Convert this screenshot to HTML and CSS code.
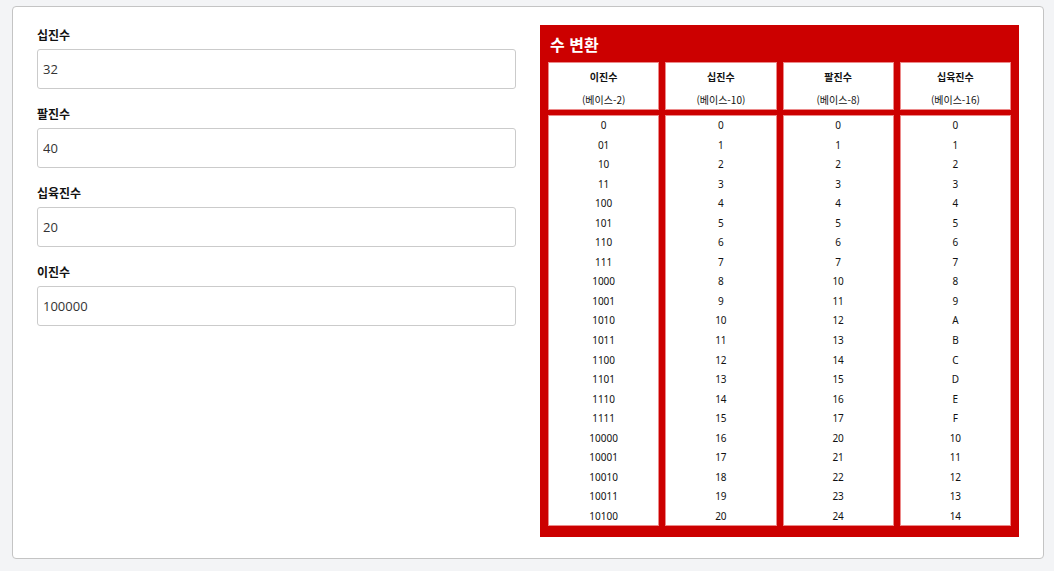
FILE: index.html
```html
<!DOCTYPE html>
<html lang="ko">
  <head>
    <meta charset="UTF-8" />
    <meta name="viewport" content="width=device-width, initial-scale=1.0" />
    <title>수 변환</title>
    <link rel="stylesheet" href="styles.css">
  </head>
  <body>
    <div class="converter-card">
      <form class="converter-form" id="converterForm">
        <div class="field">
          <label for="decimal">십진수</label>
          <input type="text" id="decimal" value="32" />
        </div>
        <div class="field">
          <label for="octal">팔진수</label>
          <input type="text" id="octal" value="40" />
        </div>
        <div class="field">
          <label for="hex">십육진수</label>
          <input type="text" id="hex" value="20" />
        </div>
        <div class="field">
          <label for="binary">이진수</label>
          <input type="text" id="binary" value="100000" />
        </div>
      </form>

      <div class="base-table">
        <h2>수 변환</h2>
        <div class="base-grid" id="baseGrid">
          <div class="head-cell"><strong>이진수</strong><span>(베이스-2)</span></div>
          <div class="head-cell"><strong>십진수</strong><span>(베이스-10)</span></div>
          <div class="head-cell"><strong>팔진수</strong><span>(베이스-8)</span></div>
          <div class="head-cell"><strong>십육진수</strong><span>(베이스-16)</span></div>
          <div class="body-cell" id="col2"></div>
          <div class="body-cell" id="col10"></div>
          <div class="body-cell" id="col8"></div>
          <div class="body-cell" id="col16"></div>
        </div>
      </div>
    </div>

    <script>
      const cols = {
        col2: (n) => (n === 1 ? "01" : n.toString(2)),
        col10: (n) => n.toString(10),
        col8: (n) => n.toString(8),
        col16: (n) => n.toString(16).toUpperCase(),
      };

      Object.keys(cols).forEach((id) => {
        const cell = document.getElementById(id);
        for (let n = 0; n <= 20; n++) {
          const row = document.createElement("div");
          row.textContent = cols[id](n);
          cell.appendChild(row);
        }
      });

      const inputs = {
        decimal: 10,
        octal: 8,
        hex: 16,
        binary: 2,
      };

      Object.keys(inputs).forEach((id) => {
        document.getElementById(id).addEventListener("input", (e) => {
          const value = parseInt(e.target.value, inputs[id]);
          if (isNaN(value)) return;
          document.getElementById("decimal").value = value.toString(10);
          document.getElementById("octal").value = value.toString(8);
          document.getElementById("hex").value = value.toString(16).toUpperCase();
          document.getElementById("binary").value = value.toString(2);
        });
      });
    </script>
  </body>
</html>
```

FILE: styles.css
```css
body {
  font-family: "Noto Sans", "Noto Sans CJK KR", sans-serif;
  background-color: #f3f4f6;
  margin: 0;
  padding: 6px 10px 11px 12px;
}
.converter-card {
  background-color: #ffffff;
  border: 1px solid #c4c4c4;
  border-radius: 4px;
  padding: 18px 24px 21px 24px;
  display: flex;
  gap: 24px;
  align-items: flex-start;
}
.converter-form {
  width: 479px;
  flex-shrink: 0;
}
.field {
  margin-bottom: 16px;
}
.field label {
  display: block;
  font-family: "Noto Sans CJK KR", sans-serif;
  font-size: 12px;
  font-weight: bold;
  color: #111;
  line-height: 18px;
  margin-top: 1px;
  margin-bottom: 5px;
}
.field input {
  box-sizing: border-box;
  width: 100%;
  height: 40px;
  padding: 0 5px;
  border: 1px solid #cbcbcb;
  border-radius: 3px;
  font-family: "Open Sans", sans-serif;
  font-size: 13px;
  color: #333;
  outline: none;
}
.base-table {
  width: 479px;
  flex-shrink: 0;
  background-color: #cc0000;
  padding: 0 8px 11px 8px;
  box-sizing: border-box;
}
.base-table h2 {
  margin: 0;
  padding: 8px 2px 0;
  height: 37px;
  box-sizing: border-box;
  font-family: "Noto Sans CJK KR", sans-serif;
  font-size: 16px;
  line-height: 22px;
  font-weight: bold;
  color: #ffffff;
}
.base-grid {
  display: grid;
  grid-template-columns: repeat(4, 1fr);
  column-gap: 6px;
  row-gap: 5px;
}
.head-cell,
.body-cell {
  background-color: #ffffff;
  border: 1px solid #ec8a8a;
  text-align: center;
  color: #111;
}
.head-cell {
  height: 48px;
  box-sizing: border-box;
  padding-top: 7px;
  font-family: "Noto Sans CJK KR", sans-serif;
  font-size: 10px;
}
.head-cell strong {
  display: block;
  line-height: 14px;
  margin-bottom: 9px;
}
.head-cell span {
  display: block;
  line-height: 14px;
}
.body-cell {
  height: 411px;
  box-sizing: border-box;
  font-size: 10px;
  line-height: 19.55px;
}
```
